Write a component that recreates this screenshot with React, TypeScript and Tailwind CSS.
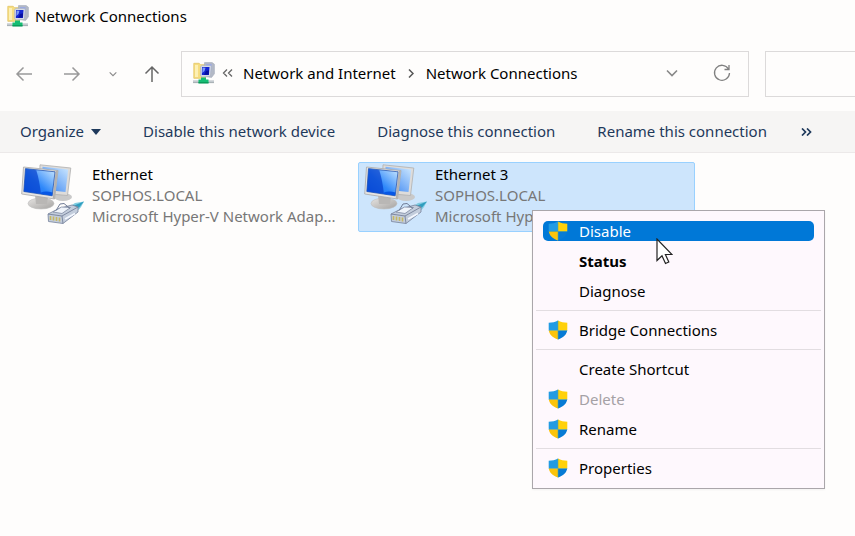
import { useId } from 'react';

function NetworkFolderIcon() {
  return (
    <svg viewBox="0 0 22 22" className="h-[22px] w-[22px] shrink-0" aria-hidden="true">
      <path d="M.8 1.3h5.4l1.3 1.4h5v13.6H.8z" fill="#f6dd80" stroke="#e3c566" strokeWidth=".8" />
      <path d="M2 3h3v12H2z" fill="#fdf0b4" />
      <path d="M11.500 .6h7.600l2.300 1.600v9.600l-2.800 3.600-7.100-1z" fill="#b3b9c6" stroke="#a3a9b8" strokeWidth=".6" />
      <path d="M13 2h5.600l-.6 8.500-3 1z" fill="#9aa9e4" />
      <path d="M7.600 4.600 9 3.400h8.200l1 1-.8 10-8.600.6L7.400 13z" fill="#d5dae6" stroke="#a8aebc" strokeWidth=".6" />
      <path d="M9 5h7.500l-.6 8H8.800z" fill="#1426d2" />
      <path d="m9.500 5.500 3 .2-1 3.300-2.200 2z" fill="#7f9bf4" />
      <path d="m13 9 3-.8-.3 4.500H11z" fill="#0710a0" />
      <path d="M0 18.300h21v2.600H0z" fill="#c4cbd0" />
      <path d="M0 20.300h21v.8H0z" fill="#9ca5aa" />
      <path d="M8 15.500h5v2h2.500v3.700h-10v-3.700H8z" fill="#15bd73" />
      <path d="M5.500 20h10v1.400h-10z" fill="#0b9b5b" />
    </svg>
  );
}

function AdapterIcon() {
  const id = useId();
  const screen = `${id}screen`;
  const back = `${id}back`;
  const stand = `${id}stand`;
  return (
    <svg viewBox="0 0 64 62" className="h-[62px] w-16 shrink-0" aria-hidden="true">
      <defs>
        <linearGradient id={screen} x1="0" y1="1" x2="1" y2="0">
          <stop offset="0" stopColor="#0a5cf0" />
          <stop offset=".45" stopColor="#2f88fa" />
          <stop offset="1" stopColor="#cfeaff" />
        </linearGradient>
        <linearGradient id={back} x1="0" y1="1" x2="1" y2="0">
          <stop offset="0" stopColor="#2d7cf0" />
          <stop offset="1" stopColor="#cfe9ff" />
        </linearGradient>
        <linearGradient id={stand} x1="0" y1="0" x2="1" y2="1">
          <stop offset="0" stopColor="#e6e4e2" />
          <stop offset="1" stopColor="#a5a3a1" />
        </linearGradient>
      </defs>
      <ellipse cx="42" cy="33" rx="9" ry="4" fill="#c9c9c9" />
      <path d="M19 .8 49.800 4 46.500 31.500 18 29z" fill="#dedcda" stroke="#b0b0b0" strokeWidth=".8" />
      <path d="M21.500 2.800 47.200 5.600 44.500 28 21 25.500z" fill={`url(#${back})`} />
      <ellipse cx="20" cy="39.500" rx="13" ry="5.500" fill={`url(#${stand})`} stroke="#c0c0c0" strokeWidth=".6" />
      <path d="m14 31 13 2-1 7H15z" fill="#b9b7b5" />
      <path d="M2.500 3 37 6.500 33.500 35 .7 30z" fill="#e6e4e2" stroke="#aaa" strokeWidth=".8" />
      <path d="m37 6.500-3.500 28.500-1.800-.4L34.700 7z" fill="#b4b2b0" />
      <path d="M4.500 4.600 34 7.800 31.200 31.800 2.800 27.500z" fill={`url(#${screen})`} stroke="#1746a5" strokeWidth=".7" />
      <path d="m4.800 5 10.500 1.200c2.200 7 3.700 15 4.600 23.600L3.200 27.200z" fill="#0640cc" fillOpacity=".7" />
      <path d="M20 28.500c3-1.500 7-1.500 11.400 0l-.4 3-11-1.600z" fill="#0757e5" />
      <path d="m45 45 9-6 9-1.500-3 5.500-2 2.500-7 3z" fill="#7fcbe0" />
      <path d="m52 42 11-4.500-5 6z" fill="#2f9dbe" />
      <path d="m27 50 11-5.500 13-3.500 6 2v5L42 59.500l-14.500-2z" fill="#c3cddc" stroke="#76819a" strokeWidth=".8" />
      <path d="m27 50 14 2L57 43M41 52l1 7.500" fill="none" stroke="#76819a" strokeWidth=".9" />
      <path d="m32 48 8.500-5 9 .5-8.500 6z" fill="#eff4fb" stroke="#7f8aa2" strokeWidth=".8" />
      <path d="m35 46.500 4-6.500 4-.5 6 5" fill="none" stroke="#707c96" />
      <path d="M29.500 52v4M32.500 52.500v4M35.500 53v4M38.500 53.500v4" stroke="#c5b765" strokeWidth="1.600" />
      <path d="m44 55 10-5.500" stroke="#f4f8ff" strokeWidth="1.600" />
    </svg>
  );
}

function ShieldIcon() {
  const clip = useId();
  return (
    <svg viewBox="0 0 20 20" className="h-5 w-5 shrink-0" aria-hidden="true">
      <defs>
        <clipPath id={clip}>
          <path d="M10 .5C7.500 2 4 2.700.7 2.700V9c0 5.300 3.800 8.700 9.300 10.500 5.500-1.800 9.300-5.200 9.300-10.500V2.700C16 2.700 12.500 2 10 .5z" />
        </clipPath>
      </defs>
      <g clipPath={`url(#${clip})`}>
        <path d="M0 0h10v10.500H0z" fill="#219be3" />
        <path d="M10 0h10v10.500H10z" fill="#ffd10a" />
        <path d="M0 10.500h10V20H0z" fill="#fcc40b" />
        <path d="M10 10.500h10V20H10z" fill="#077bd5" />
        <path d="M10 0v20M0 10.500h20" stroke="#63a889" strokeWidth=".6" />
      </g>
    </svg>
  );
}

function Chevron({ className }: { className: string }) {
  return (
    <svg viewBox="0 0 12 8" className={className} fill="none" stroke="currentColor" aria-hidden="true">
      <path d="m1 1.500 5 5 5-5" strokeWidth="1.600" />
    </svg>
  );
}

function Arrow({ className }: { className: string }) {
  return (
    <svg viewBox="0 0 18 18" className={`h-[18px] w-[18px] ${className}`} fill="none" stroke="currentColor" strokeWidth="1.500" aria-hidden="true">
      <path d="M17 9H2M8.500 2.500 2 9l6.500 6.500" />
    </svg>
  );
}

function Cursor() {
  return (
    <svg viewBox="0 0 17 27" className="pointer-events-none absolute top-[27px] left-[123px] h-[27px] w-[17px]" aria-hidden="true">
      <path d="M1 1v21.500l5-4.700 3.500 7.700 3.300-1.500-3.400-7.500H16z" fill="#fff" stroke="#222" strokeWidth="1.200" />
    </svg>
  );
}

function Adapter({ name, selected = false }: { name: string; selected?: boolean }) {
  return (
    <button
      type="button"
      aria-pressed={selected}
      className={`flex h-[70px] w-[337px] shrink-0 items-start rounded-xs border pt-px pl-[5px] text-left ${
        selected ? 'border-[#99d1ff] bg-[#cde5fc]' : 'border-transparent'
      }`}
    >
      <AdapterIcon />
      <span className="ml-[7px] min-w-0 flex-1 leading-[21px] text-[#777]">
        <span className="block text-black">{name}</span>
        <span className="block">SOPHOS.LOCAL</span>
        <span className="block whitespace-nowrap">Microsoft Hyper-V Network Adap...</span>
      </span>
    </button>
  );
}

type Entry = { label: string; shield?: boolean; active?: boolean; bold?: boolean; disabled?: boolean };

const groups: Entry[][] = [
  [{ label: 'Disable', shield: true, active: true }, { label: 'Status', bold: true }, { label: 'Diagnose' }],
  [{ label: 'Bridge Connections', shield: true }],
  [{ label: 'Create Shortcut' }, { label: 'Delete', shield: true, disabled: true }, { label: 'Rename', shield: true }],
  [{ label: 'Properties', shield: true }],
];

function ContextMenu() {
  return (
    <div role="menu" className="absolute top-[210px] left-[532px] w-[293px] border border-[#aaa6aa] bg-[#fef8fd] py-[5px] shadow-xs">
      {groups.map((group, index) => (
        <div key={group[0].label} role="group">
          {index > 0 && <hr className="mx-[3px] my-1 border-[#e2dde1]" />}
          {group.map((entry) => (
            <div key={entry.label} className="flex h-[30px] items-center px-2.5">
              <button
                type="button"
                role="menuitem"
                disabled={entry.disabled}
                className={`flex h-5 w-full items-center gap-[11px] rounded-[5px] pl-[5px] leading-5 ${
                  entry.active ? 'bg-[#0078d7] text-white' : entry.disabled ? 'text-[#a5a1a5]' : 'text-black'
                } ${entry.bold ? 'font-bold' : ''}`}
              >
                {entry.shield ? <ShieldIcon /> : <span className="w-5" />}
                {entry.label}
              </button>
            </div>
          ))}
        </div>
      ))}
      <Cursor />
    </div>
  );
}

export default function App() {
  return (
    <div className="relative min-h-screen overflow-hidden bg-[#fefdfc] font-['Noto_Sans','Open_Sans',sans-serif] text-[15px] text-black">
      <header className="flex h-8 items-center gap-1.5 pl-[7px]">
        <NetworkFolderIcon />
        <h1>Network Connections</h1>
      </header>

      <nav className="mt-[19px] flex h-[46px] items-center">
        <div className="flex w-[181px] shrink-0 items-center pl-[15px]">
          <button type="button" aria-label="Back" className="text-[#999]"><Arrow className="" /></button>
          <button type="button" aria-label="Forward" className="ml-[30px] text-[#999]"><Arrow className="rotate-180" /></button>
          <button type="button" aria-label="Recent locations" className="ml-7 text-[#888]"><Chevron className="h-[6px] w-2" /></button>
          <button type="button" aria-label="Up" className="ml-[26px] text-[#666]"><Arrow className="rotate-90" /></button>
        </div>
        <div className="flex h-full flex-1 items-center border border-[#dcdada] pr-[17px] pb-0.5 pl-[11px]">
          <NetworkFolderIcon />
          <svg viewBox="0 0 11 8" className="ml-[7px] h-2 w-[11px]" fill="none" stroke="#666" strokeWidth="1.300" aria-hidden="true">
            <path d="M5 .5 1.500 4 5 7.500M10 .5 6.500 4 10 7.500" />
          </svg>
          <button type="button" className="ml-2.5">Network and Internet</button>
          <svg viewBox="0 0 6 9" className="ml-3 h-[9px] w-1.5" fill="none" stroke="#555" strokeWidth="1.500" aria-hidden="true">
            <path d="m1 .5 4 4-4 4" />
          </svg>
          <button type="button" className="ml-3">Network Connections</button>
          <button type="button" aria-label="Previous locations" className="ml-auto text-[#888]"><Chevron className="h-2 w-3" /></button>
          <button type="button" aria-label="Refresh" className="ml-[35px]">
            <svg viewBox="0 0 18 18" className="h-[18px] w-[18px]" fill="none" stroke="#808080" strokeWidth="1.300" aria-hidden="true">
              <path d="M15.500 5A7.500 7.500 0 1 0 16.500 9M16 1v4.500h-4.500" />
            </svg>
          </button>
        </div>
        <input type="search" aria-label="Search" className="-mr-px ml-4 h-full w-[91px] shrink-0 border border-[#dcdada] bg-transparent px-2 outline-none" />
      </nav>

      <div role="toolbar" aria-label="Commands" className="mt-3.5 flex h-[42px] items-center border-b border-[#ece9e9] bg-[#f6f5f4] pl-5 text-[#1e395b]">
        <button type="button" className="flex items-center gap-[7px]">
          Organize
          <svg viewBox="0 0 10 6" className="h-1.5 w-2.5" fill="currentColor" aria-hidden="true"><path d="M0 0h10L5 6z" /></svg>
        </button>
        <button type="button" className="ml-[42px]">Disable this network device</button>
        <button type="button" className="ml-[42px]">Diagnose this connection</button>
        <button type="button" className="ml-[42px]">Rename this connection</button>
        <button type="button" aria-label="More commands" className="ml-[34px]">
          <svg viewBox="0 0 11 8" className="h-2 w-[11px]" fill="none" stroke="currentColor" strokeWidth="1.700" aria-hidden="true">
            <path d="M1 .5 4.500 4 1 7.500M6 .5 9.500 4 6 7.500" />
          </svg>
        </button>
      </div>

      <main className="flex gap-1.5 pt-[9px] pl-[15px]">
        <Adapter name="Ethernet" />
        <Adapter name="Ethernet 3" selected />
      </main>

      <ContextMenu />
    </div>
  );
}
